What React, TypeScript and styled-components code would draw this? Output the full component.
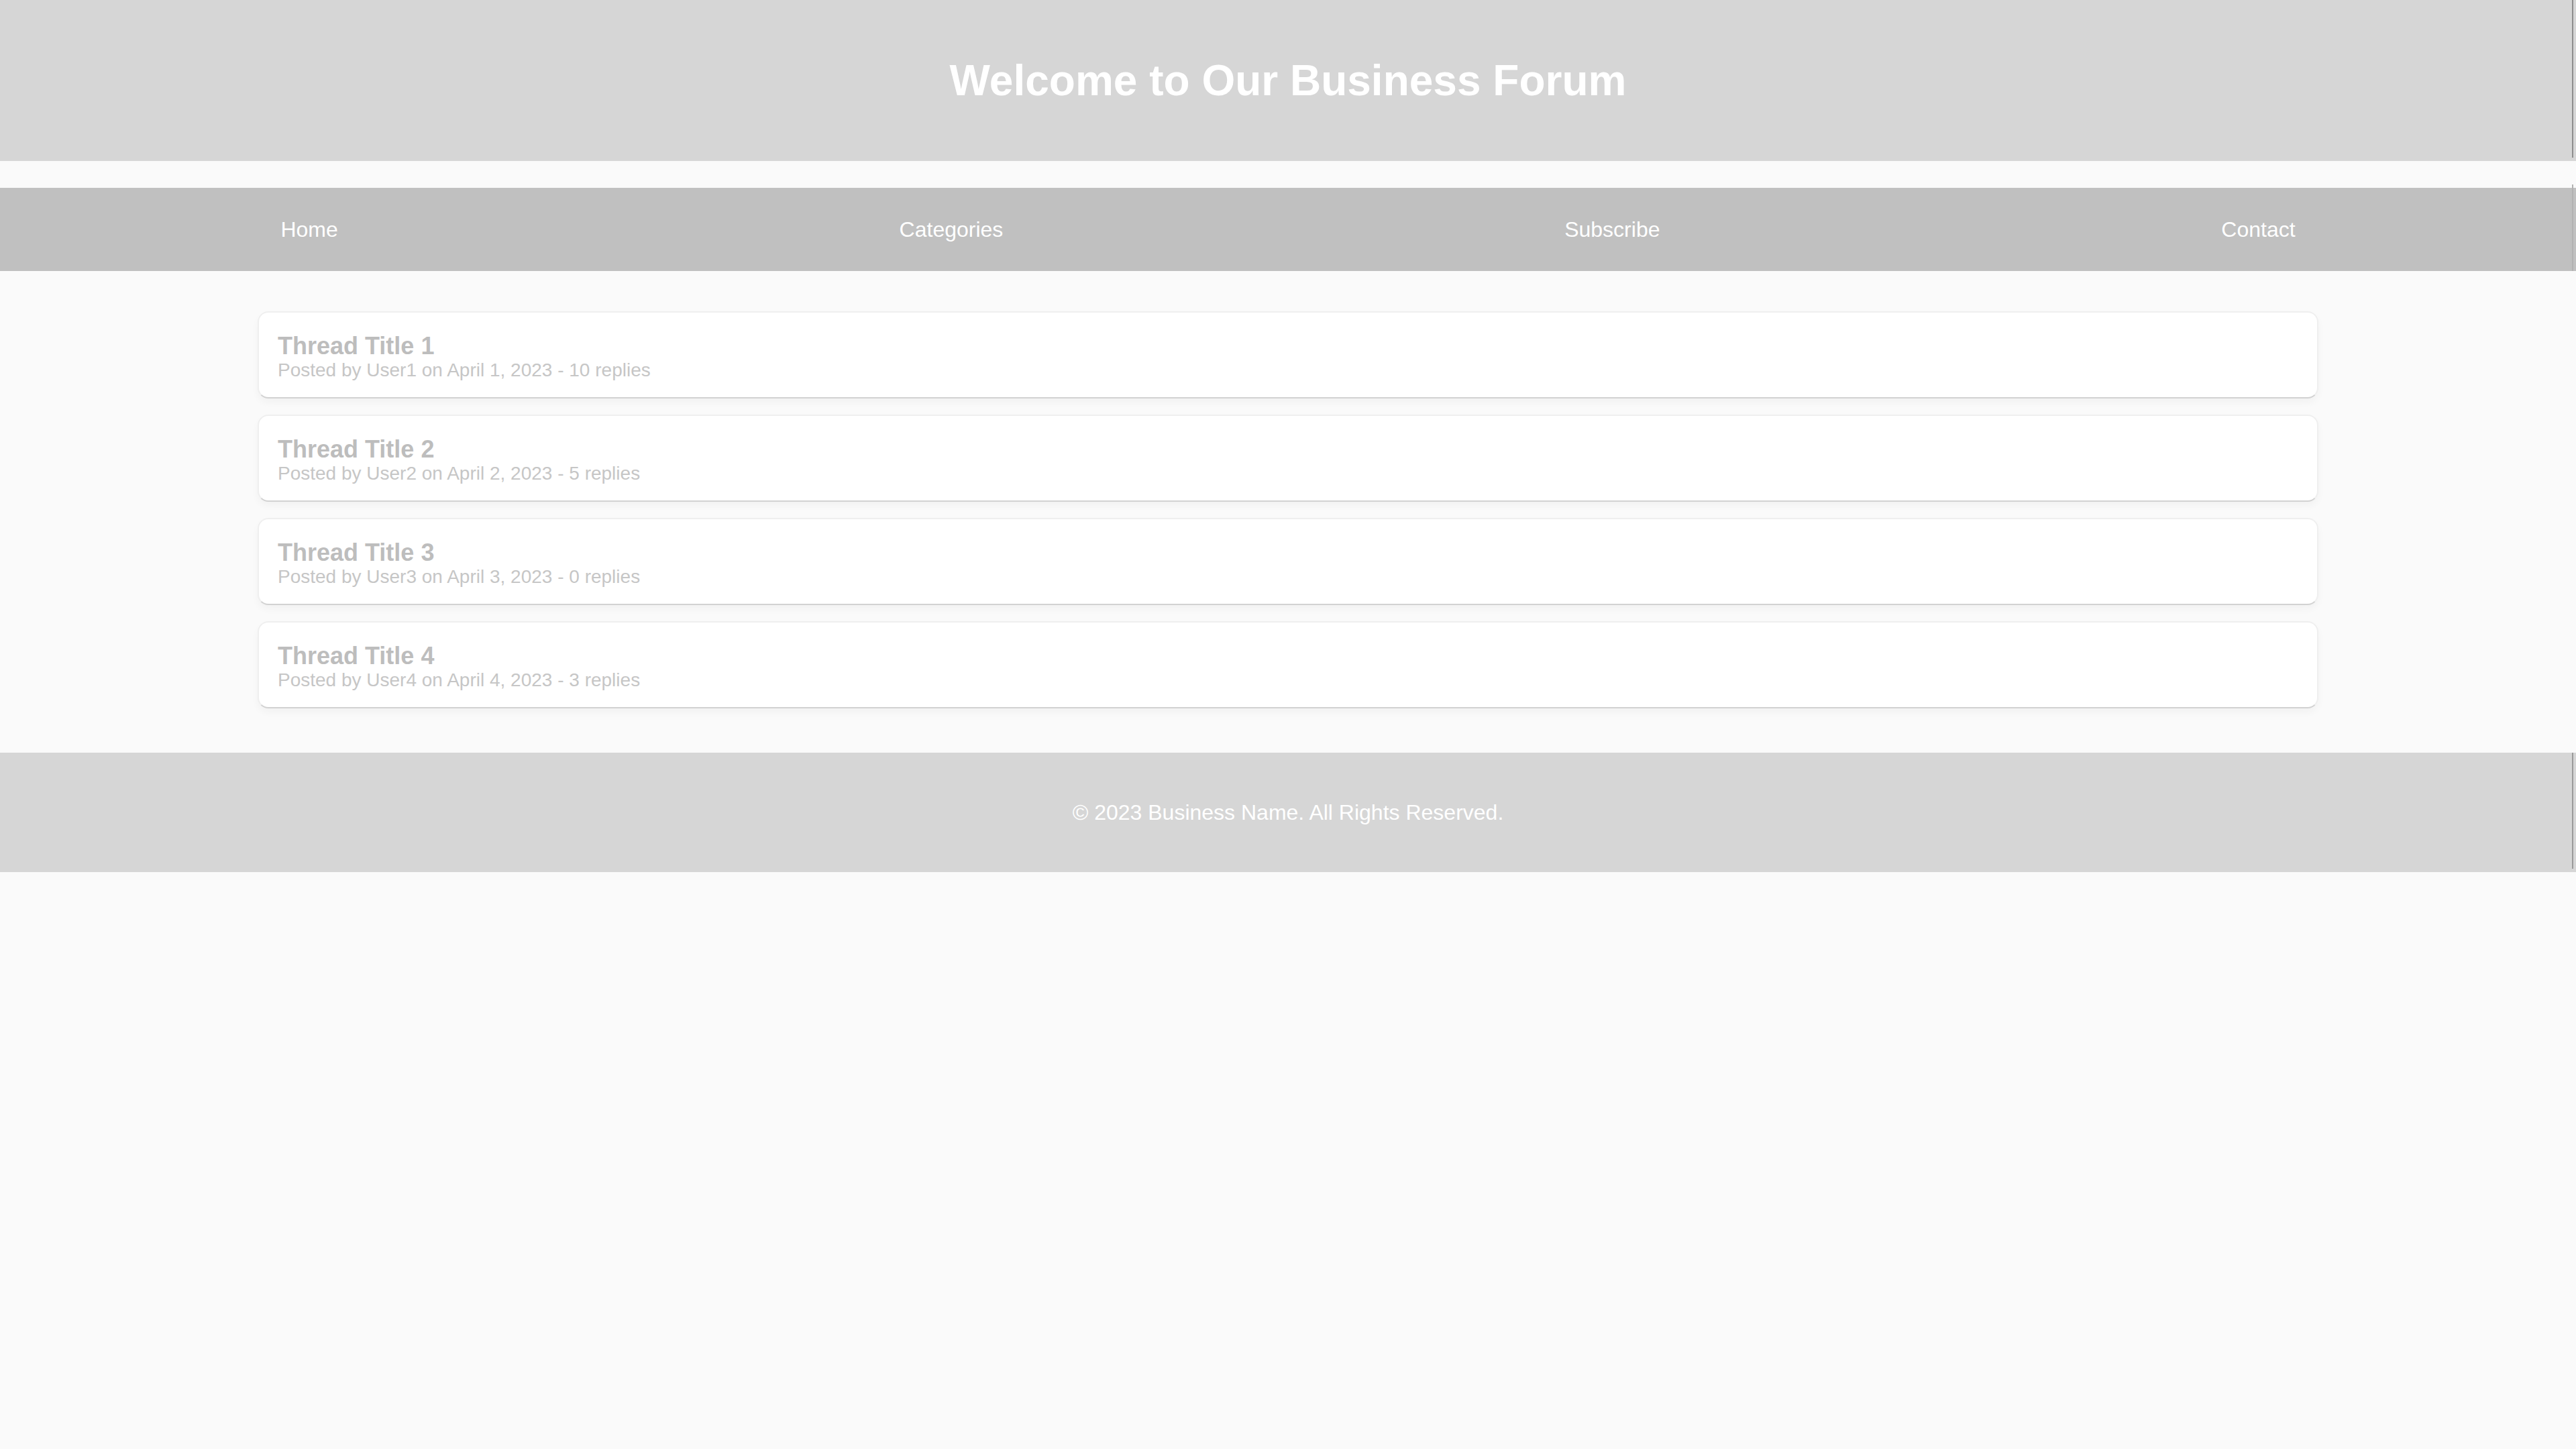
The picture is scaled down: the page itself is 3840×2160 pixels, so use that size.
import React from 'react';
import styled, { createGlobalStyle } from 'styled-components';

const GlobalStyle = createGlobalStyle`
  html, body {
    margin: 0;
    padding: 0;
    background: #fafafa;
    font-family: "Liberation Sans", Arial, sans-serif;
  }
`;

const Header = styled.header`
  position: relative;
  background: #d6d6d6;
  padding: 83px 0;
  text-align: center;

  &::after {
    content: '';
    position: absolute;
    top: 0;
    bottom: 5px;
    right: 4px;
    width: 2px;
    background: #8e8e8e;
  }
`;

const Title = styled.h1`
  margin: 0;
  font-size: 64px;
  line-height: 74px;
  font-weight: 700;
  color: #ffffff;
`;

const Nav = styled.nav`
  position: relative;
  margin-top: 40px;
  background: #c0c0c0;
  padding: 44px 0;
  display: flex;
  justify-content: space-around;
  align-items: center;

  &::after {
    content: '';
    position: absolute;
    top: -5px;
    bottom: 0;
    right: 4px;
    width: 2px;
    background: #b2b2b2;
  }
`;

const NavLink = styled.a`
  color: #ffffff;
  font-size: 32px;
  line-height: 36px;
  text-decoration: none;
`;

const Main = styled.main`
  width: 80%;
  margin: 60px auto 66px;
  display: flex;
  flex-direction: column;
  gap: 24px;
`;

const Card = styled.div`
  background: #ffffff;
  border: 2px solid #efefef;
  border-bottom-color: #d2d2d2;
  border-radius: 16px;
  padding: 30px 30px 24px 28px;
  box-shadow: 0 6px 12px rgba(0, 0, 0, 0.035);
`;

const ThreadTitle = styled.h2`
  margin: 0;
  font-size: 36px;
  line-height: 40px;
  font-weight: 700;
  color: #bdbdbd;
`;

const Meta = styled.p`
  margin: 0;
  font-size: 28px;
  line-height: 32px;
  color: #c6c6c6;
`;

const Footer = styled.footer`
  position: relative;
  background: #d6d6d6;
  padding: 70px 0;
  text-align: center;
  color: #ffffff;
  font-size: 32px;
  line-height: 38px;

  &::after {
    content: '';
    position: absolute;
    top: 0;
    bottom: 5px;
    right: 4px;
    width: 2px;
    background: #9a9a9a;
  }
`;

const threads = [
  { title: 'Thread Title 1', user: 'User1', date: 'April 1, 2023', replies: 10 },
  { title: 'Thread Title 2', user: 'User2', date: 'April 2, 2023', replies: 5 },
  { title: 'Thread Title 3', user: 'User3', date: 'April 3, 2023', replies: 0 },
  { title: 'Thread Title 4', user: 'User4', date: 'April 4, 2023', replies: 3 },
];

export default function App() {
  return (
    <>
      <GlobalStyle />
      <Header>
        <Title>Welcome to Our Business Forum</Title>
      </Header>
      <Nav>
        <NavLink href="#">Home</NavLink>
        <NavLink href="#">Categories</NavLink>
        <NavLink href="#">Subscribe</NavLink>
        <NavLink href="#">Contact</NavLink>
      </Nav>
      <Main>
        {threads.map((t) => (
          <Card key={t.title}>
            <ThreadTitle>{t.title}</ThreadTitle>
            <Meta>
              Posted by {t.user} on {t.date} - {t.replies} replies
            </Meta>
          </Card>
        ))}
      </Main>
      <Footer>© 2023 Business Name. All Rights Reserved.</Footer>
    </>
  );
}
